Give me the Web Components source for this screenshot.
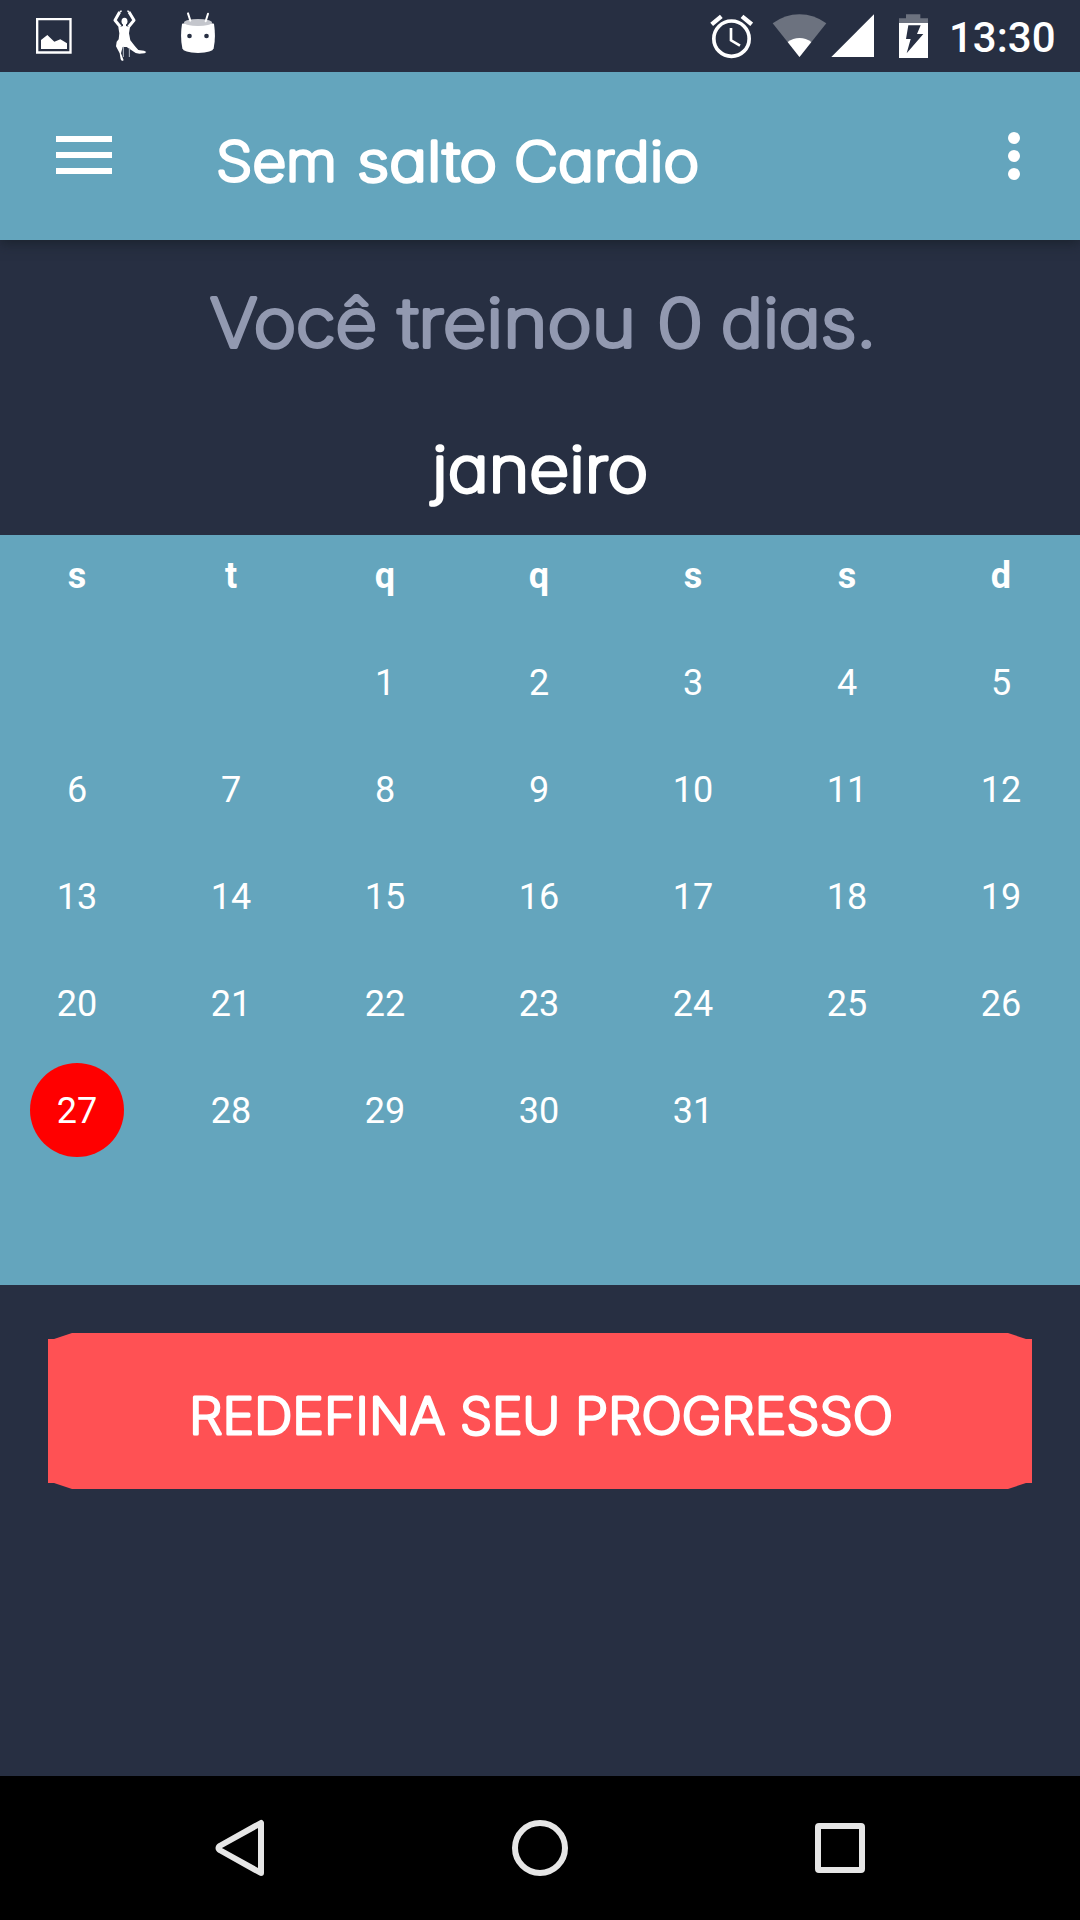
<!DOCTYPE html>
<html lang="pt-BR">

<head>
    <meta charset="UTF-8">
    <meta name="viewport" content="width=device-width, initial-scale=1.0">
    <title>Sem salto Cardio</title>
    <style>
        body {
            margin: 0;
            background: #272f42;
            font-family: Roboto, "Liberation Sans", sans-serif;
            color: #fff;
        }

        app-screen {
            --bar: #64a5bd;
            --dark: #272f42;
        }
    </style>
</head>

<body>
    <template id="screen-template">
        <style>
            :host {
                display: flex;
                flex-direction: column;
                width: 1080px;
                height: 1920px;
                overflow: hidden;
                background: var(--dark);
            }

            main {
                flex: 1;
                display: flex;
                flex-direction: column;
            }
        </style>
        <slot name="status"></slot>
        <slot name="bar"></slot>
        <main>
            <slot></slot>
        </main>
        <slot name="nav"></slot>
    </template>

    <template id="status-template">
        <style>
            :host {
                display: flex;
                flex: none;
                height: 72px;
                padding: 0 25px 0 36px;
            }

            svg {
                display: block;
                height: 72px;
                fill: #fff;
            }

            .spacer {
                flex: 1;
            }

            time {
                width: 106px;
                line-height: 76px;
                font-size: 42px;
                font-weight: 500;
                white-space: nowrap;
            }
        </style>
        <svg width="36" viewBox="108 0 108 216">
            <path d="M111.500 57.500H211.500V157.500H111.500Z" fill="none" stroke="#fff" stroke-width="7" />
            <path d="M123 147V120L142 105L163 125L181 118L201 130V147Z" />
        </svg>
        <svg width="34" viewBox="339 0 102 216" style="margin-left: 41px">
            <path d="M359 36L345 61L361 80M387 36L402 61L386 80" fill="none" stroke="#fff" stroke-width="9" stroke-linejoin="round" />
            <path d="M359 35L365 33M382 33L388 35" fill="none" stroke="#fff" stroke-width="4" />
            <ellipse cx="373.500" cy="64" rx="9" ry="10.500" />
            <path d="M369 70H378V78L390 81L387 100L391 121L405 139L415 150L432 152L439 156L434 160L418 161L407 159L380 141H368L363 160L371 181L366 183L362 178L359 160L348 139L350 125L356 118L358 100L355 82L369 78Z" />
            <path d="M370 140V171M388 144V171" fill="none" stroke="#b9bec9" stroke-width="3" />
        </svg>
        <svg width="34" viewBox="543 0 102 216" style="margin-left: 34px">
            <path d="M546 71Q594 60 642 71Q648 112 641 145Q638 158 594 159Q550 158 547 145Q540 112 546 71Z" />
            <ellipse cx="594" cy="67.500" rx="42" ry="10.500" fill="#c4c6cc" />
            <path d="M564 40L571 62M624 41L617 64" stroke="#fff" stroke-width="6" stroke-linecap="round" />
            <circle cx="568.500" cy="108" r="7" fill="#272f42" />
            <circle cx="619.500" cy="108" r="7" fill="#272f42" />
        </svg>
        <div class="spacer"></div>
        <svg width="43" viewBox="60 0 129 216">
            <circle cx="124.500" cy="116" r="53" fill="none" stroke="#fff" stroke-width="11" />
            <path d="M65 73L94 49M185 73L156 49" stroke="#fff" stroke-width="13" />
            <path d="M123 84V121L150 137" fill="none" stroke="#fff" stroke-width="8" />
        </svg>
        <svg width="55" viewBox="246 0 165 216" style="margin-left: 19px">
            <path d="M248 70Q285 43 328.500 43Q372 43 409 70L328.500 171Z" fill="#6c727f" />
            <path d="M293 126Q309 114 328.500 114Q348 114 364 126L328.500 171Z" />
        </svg>
        <svg width="43" viewBox="423 0 129 216" style="margin-left: 4px">
            <path d="M424 171L552 43V171Z" />
        </svg>
        <svg width="29" viewBox="627 0 87 216" style="margin-left: 25px">
            <path d="M627 69V55H648V43H691V55H714V69Z" fill="#6c727f" />
            <path d="M627 69H714V174H627Z" />
            <path d="M655 76H692L681 102H700L650 160L662 117H648Z" fill="#272f42" />
        </svg>
        <div style="width: 21px"></div>
        <time><slot></slot></time>
    </template>

    <template id="bar-template">
        <style>
            :host {
                display: flex;
                flex: none;
                align-items: flex-start;
                height: 168px;
                background: var(--bar);
                box-shadow: 0 3px 12px rgba(20, 28, 36, .7);
                clip-path: inset(0 0 -24px);
                position: relative;
            }

            .menu {
                display: grid;
                gap: 10px;
                width: 56px;
                margin: 64px 0 0 56px;
            }

            .menu i {
                height: 6px;
                background: #fff;
            }

            .title {
                flex: 1;
                padding-left: 104px;
            }

            .more {
                display: grid;
                gap: 6px;
                margin: 60px 60px 0 0;
            }

            .more i {
                width: 12px;
                height: 12px;
                border-radius: 50%;
                background: #fff;
            }
        </style>
        <div class="menu"><i></i><i></i><i></i></div>
        <div class="title"><slot></slot></div>
        <div class="more"><i></i><i></i><i></i></div>
    </template>

    <template id="calendar-template">
        <style>
            :host {
                display: block;
                flex: none;
                box-sizing: border-box;
                height: 750px;
                background: var(--bar);
                font-size: 36px;
            }

            .grid {
                display: grid;
                grid-template-columns: repeat(7, 154px);
                grid-template-rows: 93.500px;
                grid-auto-rows: 107.100px;
            }

            .grid > * {
                display: flex;
                align-items: center;
                justify-content: center;
            }

            b {
                height: 82px;
            }

            span {
                width: 94px;
                height: 94px;
                line-height: 96px;
                border-radius: 50%;
                text-align: center;
            }

            .today span {
                background: #f00;
            }
        </style>
        <div class="grid"></div>
    </template>

    <template id="button-template">
        <style>
            :host {
                display: block;
                margin: 48px 48px 0;
            }

            button {
                display: flex;
                justify-content: center;
                width: 100%;
                height: 156px;
                padding: 0;
                border: 0;
                background: #ff5154;
                color: #fff;
                clip-path: polygon(0 6px, 6px 6px, 24px 0, calc(100% - 24px) 0, calc(100% - 6px) 6px, 100% 6px, 100% calc(100% - 6px), calc(100% - 6px) calc(100% - 6px), calc(100% - 24px) 100%, 24px 100%, 6px calc(100% - 6px), 0 calc(100% - 6px));
            }
        </style>
        <button><slot></slot></button>
    </template>

    <template id="nav-template">
        <style>
            :host {
                display: flex;
                flex: none;
                justify-content: center;
                align-items: center;
                gap: 240px;
                height: 144px;
                background: #000;
            }

            svg {
                width: 60px;
                height: 60px;
                fill: none;
                stroke: #e6e6e6;
                stroke-width: 6;
                stroke-linejoin: round;
            }
        </style>
        <svg viewBox="0 0 60 60"><path d="M51 5V55L10.500 32.500Q6.500 30 10.500 27.500Z" /></svg>
        <svg viewBox="0 0 60 60"><circle cx="30" cy="30" r="25" /></svg>
        <svg viewBox="0 0 60 60"><rect x="8" y="8" width="44" height="44" rx="1" /></svg>
    </template>

    <app-screen>
        <status-bar slot="status">13:30</status-bar>
        <app-bar slot="bar">
            <round-text text="Sem salto Cardio" fit="0 121,141 140,298 185" size="54.500" width="484" height="168" base="108.500" stroke="3.400"></round-text>
        </app-bar>
        <round-text text="Você treinou 0 dias." fit="2 167,190 238,449 46,513 155" size="67" width="664" height="150" base="106.500" stroke="4" style="color: #9299b0; margin: 0 auto"></round-text>
        <round-text text="janeiro" fit="2 216" size="63" width="220" height="145" base="102" stroke="3.600" style="margin: 0 auto"></round-text>
        <month-calendar start="2" days="31" today="27"></month-calendar>
        <flat-button>
            <round-text text="REDEFINA SEU PROGRESSO" fit="1 256,272 100,387 318" size="50.500" width="704" height="156" base="100.500" stroke="3.200"></round-text>
        </flat-button>
        <nav-bar slot="nav"></nav-bar>
    </app-screen>

    <script>
        function defineFromTemplate(name, id) {
            customElements.define(name, class extends HTMLElement {
                constructor() {
                    super();
                    this.attachShadow({ mode: 'open' });
                    this.shadowRoot.appendChild(document.getElementById(id).content.cloneNode(true));
                }
            });
        }

        // text with rounded stroke ends; "fit" holds the offset and length of each word
        class RoundText extends HTMLElement {
            constructor() {
                super();
                this.attachShadow({ mode: 'open' });
            }

            connectedCallback() {
                const get = (name) => this.getAttribute(name);
                const fit = get('fit').split(',').map((f) => f.split(' '));
                const words = get('text').split(' ').map((word, i) =>
                    `<tspan x="${fit[i][0]}" textLength="${fit[i][1]}" lengthAdjust="spacingAndGlyphs">${word}</tspan>`);

                this.shadowRoot.innerHTML = `
                    <style>
                        :host {
                            display: block;
                            flex: none;
                        }

                        svg {
                            display: block;
                            overflow: visible;
                        }

                        text {
                            font-family: Inter, Lato, sans-serif;
                            font-weight: 200;
                            font-feature-settings: "cv11";
                            fill: currentColor;
                            stroke: currentColor;
                            stroke-linejoin: round;
                        }
                    </style>
                    <svg width="${get('width')}" height="${get('height')}">
                        <text y="${get('base')}" font-size="${get('size')}" stroke-width="${get('stroke')}">${words.join(' ')}</text>
                    </svg>`;
            }
        }

        class MonthCalendar extends HTMLElement {
            constructor() {
                super();
                this.attachShadow({ mode: 'open' });
                this.shadowRoot.appendChild(document.getElementById('calendar-template').content.cloneNode(true));
            }

            connectedCallback() {
                const grid = this.shadowRoot.querySelector('.grid');
                const today = Number(this.getAttribute('today'));
                let html = ['s', 't', 'q', 'q', 's', 's', 'd'].map((d) => `<b>${d}</b>`).join('');
                html += '<div></div>'.repeat(Number(this.getAttribute('start')));
                for (let day = 1; day <= Number(this.getAttribute('days')); day++) {
                    html += `<div${day === today ? ' class="today"' : ''}><span>${day}</span></div>`;
                }
                grid.innerHTML = html;
            }
        }

        defineFromTemplate('app-screen', 'screen-template');
        defineFromTemplate('status-bar', 'status-template');
        defineFromTemplate('app-bar', 'bar-template');
        defineFromTemplate('flat-button', 'button-template');
        defineFromTemplate('nav-bar', 'nav-template');
        customElements.define('round-text', RoundText);
        customElements.define('month-calendar', MonthCalendar);
    </script>
</body>

</html>
